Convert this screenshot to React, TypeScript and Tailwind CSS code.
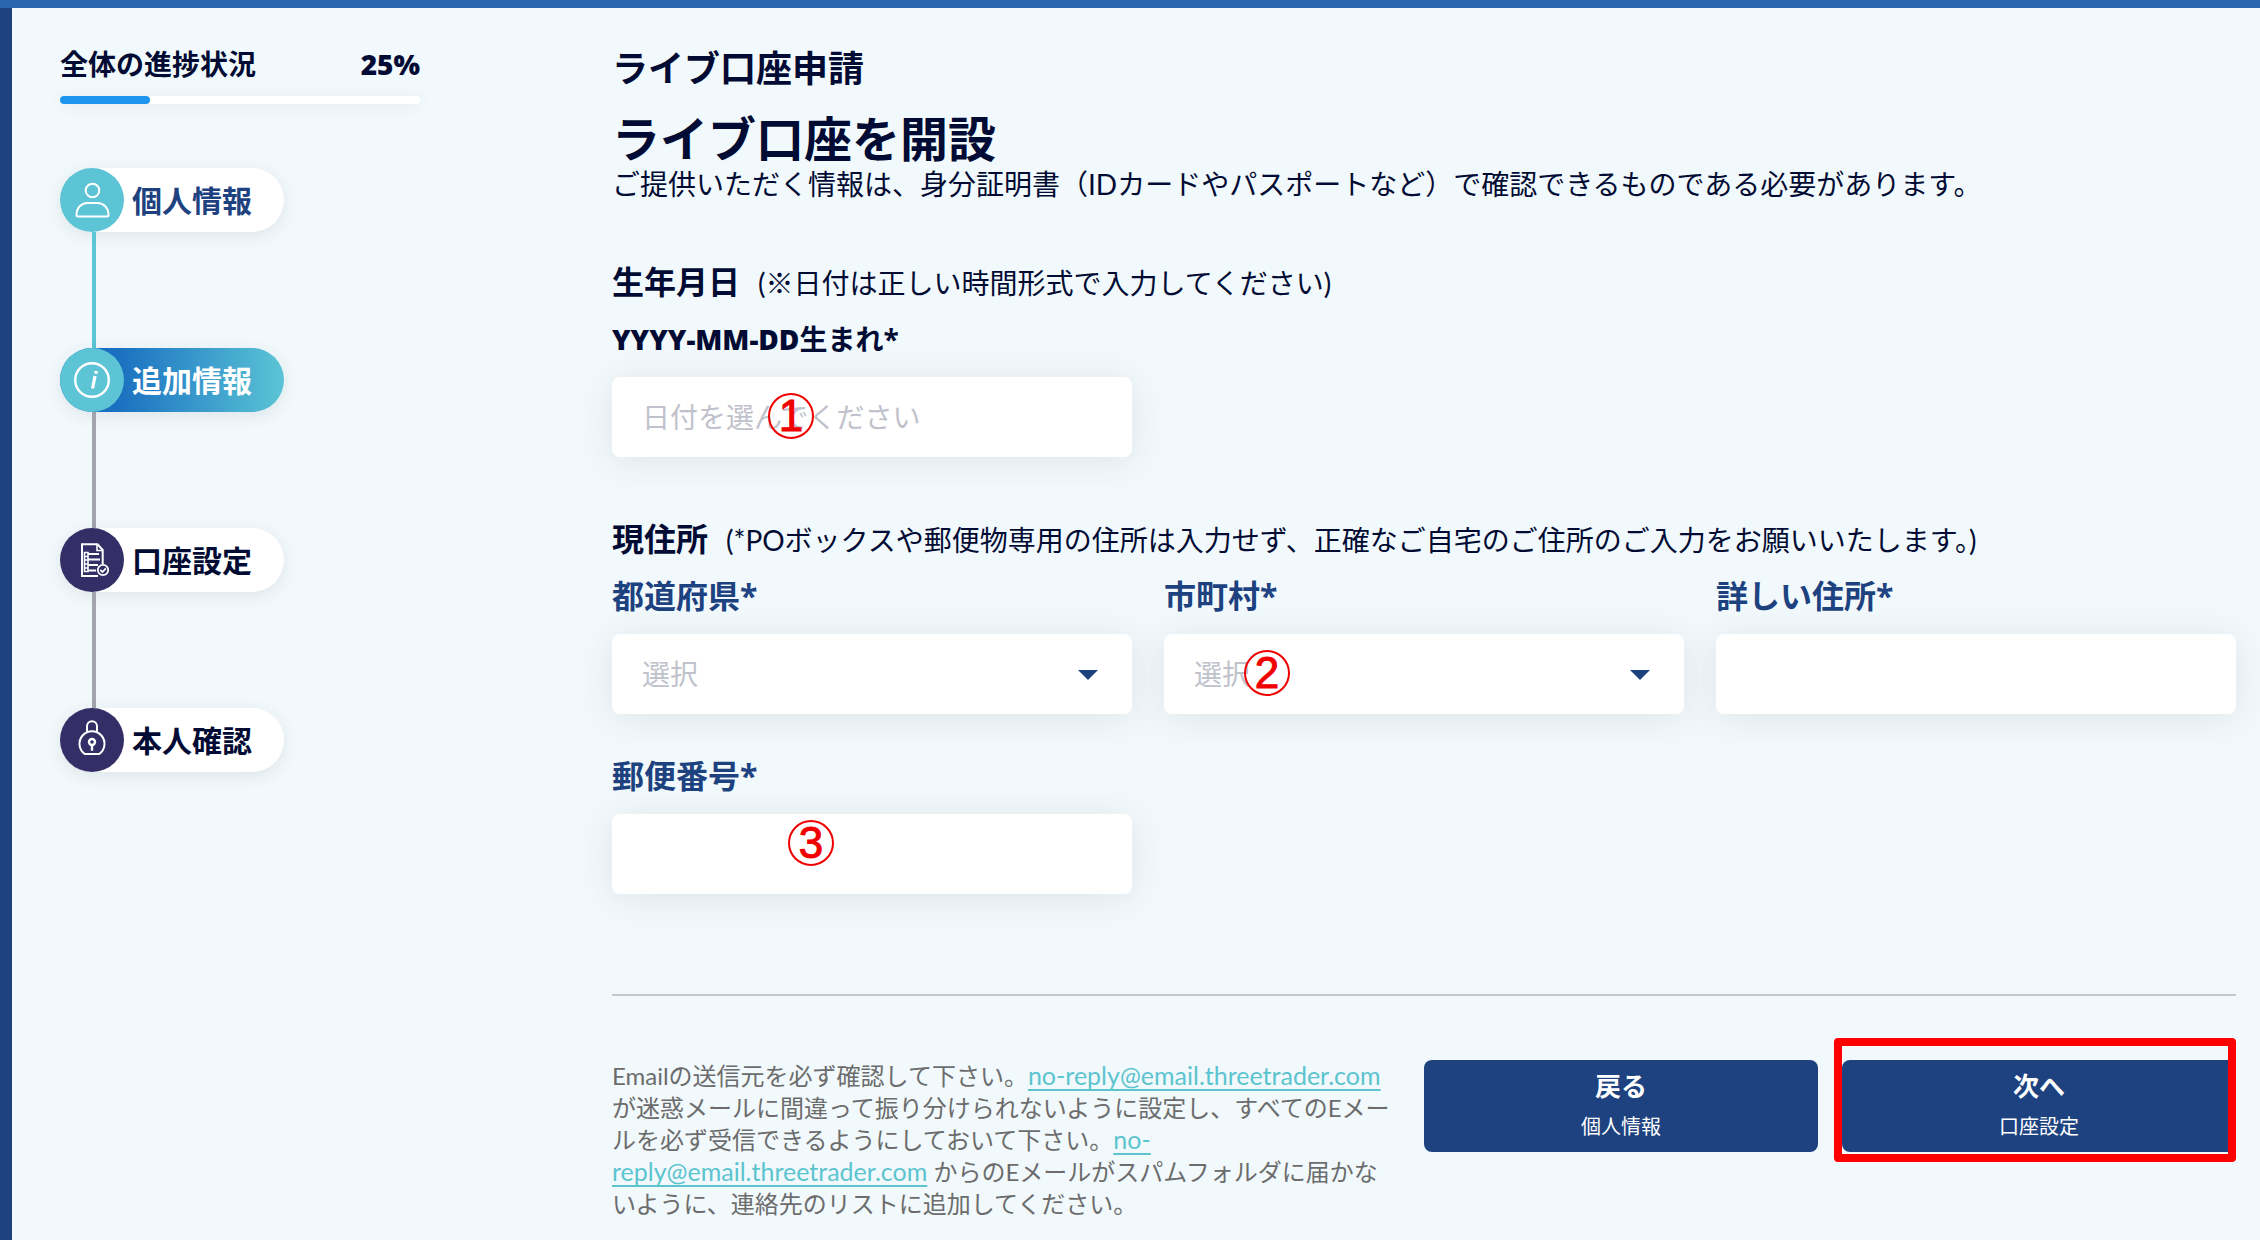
import type { ReactNode } from "react";

type Step = { label: string; state: "done" | "current" | "todo"; icon: ReactNode };

const UserIcon = () => (
  <svg viewBox="0 0 40 40" className="size-10" fill="none" stroke="white" strokeWidth="2" aria-hidden="true">
    <circle cx="20.5" cy="10.5" r="6.8" />
    <path d="M6 36.6c-.9 0-1.500-.6-1.500-1.500C4.500 27.500 9.500 23 15.500 23h10c6 0 11 4.500 11 12.100 0 .9-.6 1.500-1.500 1.500Z" />
  </svg>
);

const InfoIcon = () => (
  <svg viewBox="0 0 40 40" className="size-10" fill="none" stroke="white" aria-hidden="true">
    <circle cx="20" cy="20" r="16.800" strokeWidth="2.400" />
    <path d="M23 16 20.600 28.500" strokeWidth="3.200" />
    <path d="M24.300 11 23.800 13.800" strokeWidth="3.400" />
  </svg>
);

const DocIcon = () => (
  <svg viewBox="0 0 40 40" className="size-10" fill="none" stroke="white" strokeWidth="2" aria-hidden="true">
    <path d="M26 36H10V4.300h15.500l5.200 5.700V24" />
    <path d="M25 4v6.500h6" strokeWidth="1.600" />
    <path d="M12.500 12.500h3.500v19h-3.500zM12.500 16.500h3.500M12.500 20h3.500M12.500 24h3.500M12.500 28h3.500" strokeWidth="1.600" />
    <path d="M16 14h11M16 19.500h12M16 25h10M16 30.500h8" strokeWidth="1.800" />
    <circle cx="31" cy="30" r="5.200" strokeWidth="1.800" />
    <path d="m28.300 29.800 2.200 2.200 3.300-3.700" strokeWidth="1.800" />
  </svg>
);

const LockIcon = () => (
  <svg viewBox="0 0 40 40" className="size-10" fill="none" stroke="white" strokeWidth="2" aria-hidden="true">
    <path d="M15 12V6.300a5 5 0 0 1 10 0V12" />
    <path d="M13 34.100a12.500 12.500 0 1 1 14 0Z" />
    <circle cx="20" cy="22" r="3" strokeWidth="2.400" />
    <path d="M20 25v5.700" strokeWidth="2.400" />
  </svg>
);

const steps: Step[] = [
  { label: "個人情報", state: "done", icon: <UserIcon /> },
  { label: "追加情報", state: "current", icon: <InfoIcon /> },
  { label: "口座設定", state: "todo", icon: <DocIcon /> },
  { label: "本人確認", state: "todo", icon: <LockIcon /> },
];

const pillStyles = {
  done: "bg-white text-[#1d427f]",
  current: "bg-linear-to-r from-[#1a6fc0] from-25% to-[#5cc4d5] text-white",
  todo: "bg-white text-[#020b33]",
};
const circleStyles = {
  done: "bg-[#5cc4d5]",
  current: "bg-[#5cc4d5]",
  todo: "bg-[#332f66]",
};

const strongFont = "font-['Open_Sans','Noto_Sans_CJK_JP',sans-serif]";

function Sidebar() {
  const progress = 25;
  return (
    <aside className="w-[360px] shrink-0 pt-9">
      <div className={`flex items-center justify-between text-[28px] leading-10 font-bold ${strongFont}`}>
        <span id="progress-label">全体の進捗状況</span>
        <span className="font-extrabold">{progress}%</span>
      </div>
      <div
        role="progressbar"
        aria-labelledby="progress-label"
        aria-valuenow={progress}
        className="mt-3 h-2 rounded-full bg-white shadow-[0_2px_16px_rgba(60,60,60,0.08)]"
      >
        <div className="h-2 rounded-full bg-[#1d95ef]" style={{ width: `${progress}%` }} />
      </div>
      <ol className="mt-16">
        {steps.map((step, i) => (
          <li key={step.label}>
            <a
              href="#"
              className={`flex h-16 w-[224px] items-center gap-2 rounded-full text-[30px] font-bold shadow-[0_4px_16px_rgba(60,60,60,0.1)] ${pillStyles[step.state]}`}
            >
              <span className={`flex size-16 items-center justify-center rounded-full ${circleStyles[step.state]}`}>
                {step.icon}
              </span>
              {step.label}
            </a>
            {i < steps.length - 1 && (
              <div className={`ml-8 h-[116px] w-1 ${step.state === "done" ? "bg-[#5cc4d5]" : "bg-[#a2a5ad]"}`} />
            )}
          </li>
        ))}
      </ol>
    </aside>
  );
}

const boxClass =
  "block h-20 w-full appearance-none rounded-lg bg-white px-[30px] text-[28px] text-[#020b33] shadow-[0_4px_36px_rgba(60,60,60,0.1)] outline-none placeholder:text-[#bfc2cb]";

function Marker({ n, className }: { n: number; className: string }) {
  return (
    <span
      className={`pointer-events-none absolute flex size-[46px] items-center justify-center rounded-full border-2 border-[#f00000] font-['Liberation_Sans',sans-serif] text-[44px] leading-none text-[#f00000] [-webkit-text-stroke:1px_#f00000] ${className}`}
    >
      {n}
    </span>
  );
}

function SelectField({ id, label, marker }: { id: string; label: string; marker?: ReactNode }) {
  return (
    <div>
      <label htmlFor={id} className={`block text-[32px] leading-10 font-bold text-[#1d427f] ${strongFont}`}>
        {label}
      </label>
      <div className="relative mt-[18px]">
        <select id={id} defaultValue="" className={`${boxClass} text-[#bfc2cb]`}>
          <option value="">選択</option>
        </select>
        <svg viewBox="0 0 20 10" className="pointer-events-none absolute top-9 right-[34px] h-2.5 w-5" aria-hidden="true">
          <path d="M0 0h20L10 10Z" fill="#1d427f" />
        </svg>
        {marker}
      </div>
    </div>
  );
}

function TextField({ id, label, marker }: { id: string; label: string; marker?: ReactNode }) {
  return (
    <div>
      <label htmlFor={id} className={`block text-[32px] leading-10 font-bold text-[#1d427f] ${strongFont}`}>
        {label}
      </label>
      <div className="relative mt-[18px]">
        <input id={id} type="text" className={boxClass} />
        {marker}
      </div>
    </div>
  );
}

const mailLink = "text-[25px] leading-6 text-[#5cc4cf] underline decoration-2 underline-offset-4";

export default function App() {
  return (
    <div className="min-h-screen border-t-8 border-[#2a66af] bg-[#f1f9fc] font-['Lato','Noto_Sans_CJK_JP',sans-serif] text-[#020b33]">
      <div className="flex min-h-[calc(100vh-8px)] border-l-12 border-[#1d427f] pr-6 pl-12">
        <Sidebar />
        <main className="ml-48 min-w-0 flex-1 pt-9">
          <p className="text-[36px] leading-[48px] font-bold">ライブ口座申請</p>
          <h1 className="mt-[18px] text-[48px] leading-[58px] font-bold">ライブ口座を開設</h1>
          <p className="text-[28px] leading-8">
            ご提供いただく情報は、身分証明書（IDカードやパスポートなど）で確認できるものである必要があります。
          </p>

          <form>
            <section className="mt-[62px]">
              <h2 className="flex items-baseline gap-[18px] leading-10">
                <span className="text-[32px] font-bold">生年月日</span>
                <span className="text-[28px] font-normal">(※日付は正しい時間形式で入力してください)</span>
              </h2>
              <label htmlFor="birth" className={`mt-4 block text-[28px] leading-10 font-bold ${strongFont}`}>
                <span className="font-extrabold">YYYY-MM-DD</span>生まれ*
              </label>
              <div className="mt-[18px] grid grid-cols-3 gap-8">
                <div className="relative">
                  <input id="birth" type="text" placeholder="日付を選んでください" className={boxClass} />
                  <Marker n={1} className="top-4 left-[156px]" />
                </div>
              </div>
            </section>

            <section className="mt-[62px]">
              <h2 className="flex items-baseline gap-[18px] leading-10">
                <span className="text-[32px] font-bold">現住所</span>
                <span className="text-[28px] font-normal">
                  (*POボックスや郵便物専用の住所は入力せず、正確なご自宅のご住所のご入力をお願いいたします。)
                </span>
              </h2>
              <div className="mt-4 grid grid-cols-3 gap-x-8 gap-y-[42px]">
                <SelectField id="pref" label="都道府県*" />
                <SelectField id="city" label="市町村*" marker={<Marker n={2} className="top-4 left-20" />} />
                <TextField id="street" label="詳しい住所*" />
                <TextField id="zip" label="郵便番号*" marker={<Marker n={3} className="top-1.5 left-44" />} />
              </div>
            </section>

            <footer className="mt-[100px] grid grid-cols-2 border-t-2 border-[#c3c9ce] pt-16">
              <p className="pr-8 text-[24px] leading-8 text-[#6c6c6c]">
                Emailの送信元を必ず確認して下さい。
                <a href="mailto:no-reply@email.threetrader.com" className={mailLink}>
                  no-reply@email.threetrader.com
                </a>
                が迷惑メールに間違って振り分けられないように設定し、すべてのEメールを必ず受信できるようにしておいて下さい。
                <a href="mailto:no-reply@email.threetrader.com" className={mailLink}>
                  no-reply@email.threetrader.com
                </a>{" "}
                からのEメールがスパムフォルダに届かないように、連絡先のリストに追加してください。
              </p>
              <div className="grid grid-cols-2 items-start gap-6">
                <button type="button" className="flex h-[92px] flex-col items-center rounded-lg bg-[#1d427f] pt-2 text-white">
                  <span className="text-[26px] leading-9 font-bold">戻る</span>
                  <span className="text-[20px] leading-11">個人情報</span>
                </button>
                <div className="relative">
                  <button type="button" className="flex h-[92px] w-full flex-col items-center rounded-lg bg-[#1d427f] pt-2 text-white">
                    <span className="text-[26px] leading-9 font-bold">次へ</span>
                    <span className="text-[20px] leading-11">口座設定</span>
                  </button>
                  <span className="pointer-events-none absolute -top-[22px] right-0 -bottom-2.5 -left-2 rounded-sm border-8 border-[#ff0000]" />
                </div>
              </div>
            </footer>
          </form>
        </main>
      </div>
    </div>
  );
}
